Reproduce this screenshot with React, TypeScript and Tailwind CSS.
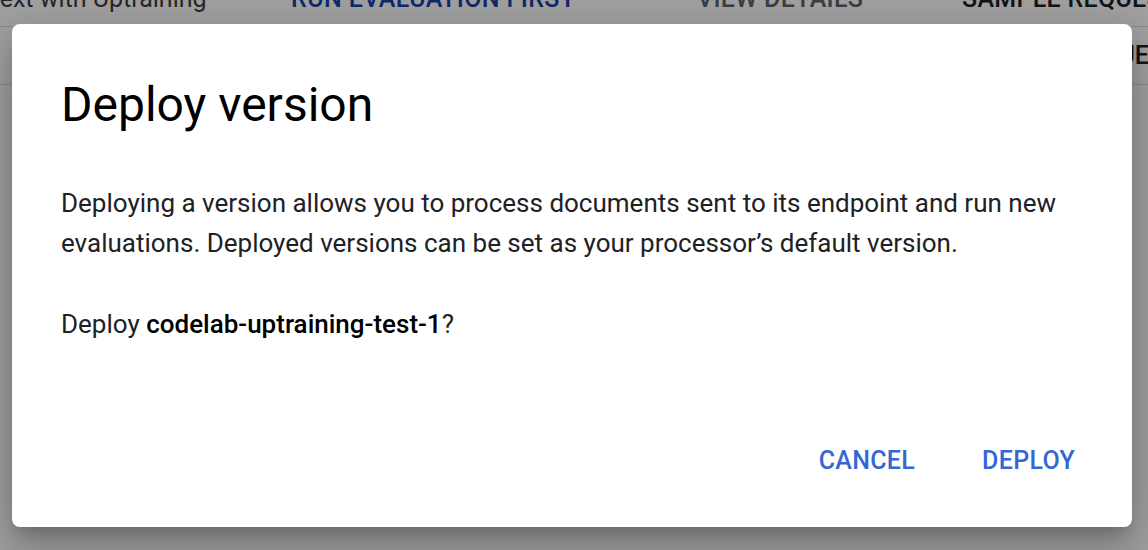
import React from "react";

const font = { fontFamily: "Roboto, 'Liberation Sans', sans-serif" };

const BackgroundPage = () => {
  return (
    <div className="absolute inset-0 bg-white">
      {/* toolbar row, mostly cut off at the top */}
      <div className="h-[27px] overflow-hidden border-b border-[#dadce0]">
        <div className="-mt-[15px] flex text-[25px] leading-[28px] whitespace-nowrap">
          <span className="-ml-[14px] w-[305px] shrink-0 text-[#3c4043]">Text with Uptraining</span>
          <span className="w-[406px] shrink-0 font-medium text-[#1a3fa8] tracking-[0.4px]">RUN EVALUATION FIRST</span>
          <span className="w-[265px] shrink-0 font-medium text-[#5f6368] tracking-[0.3px]">VIEW DETAILS</span>
          <span className="shrink-0 font-medium text-[#202124] tracking-[0.3px]">SAMPLE REQUEST</span>
        </div>
      </div>
      <div className="flex h-[58px] items-center justify-end overflow-hidden border-b border-[#dadce0] text-[25px] text-[#202124]">
        <span className="-mr-[1px] whitespace-nowrap font-medium">REQUE</span>
      </div>
    </div>
  );
};

const DeployDialog = () => {
  return (
    <div className="flex h-[503px] w-[1120px] flex-col rounded-[8px] bg-white pl-[49px] pr-[49px] shadow-[0_11px_15px_-7px_rgba(0,0,0,0.2),0_24px_38px_3px_rgba(0,0,0,0.14),0_9px_46px_8px_rgba(0,0,0,0.12)]">
      <h1 className="mt-[57px] text-[48px] leading-[48px] text-black">Deploy version</h1>
      <p className="mt-[54px] text-[26px] leading-[40px] text-[#202124]">
        Deploying a version allows you to process documents sent to its endpoint and run new evaluations. Deployed
        versions can be set as your processor’s default version.
      </p>
      <p className="mt-[41px] text-[26px] leading-[40px] text-[#202124]">
        Deploy <span className="font-medium text-black">codelab-uptraining-test-1</span>?
      </p>
      <div className="mt-auto mb-[48px] flex justify-end gap-[67px] pr-[8px]">
        <button className="text-[25px] font-medium tracking-[0.3px] text-[#3367d6]">CANCEL</button>
        <button className="text-[25px] font-medium tracking-[0.3px] text-[#3367d6]">DEPLOY</button>
      </div>
    </div>
  );
};

export default function App() {
  return (
    <div className="relative h-[550px] w-[1148px] overflow-hidden" style={font}>
      <BackgroundPage />
      <div className="absolute inset-0 bg-black/[0.37] pl-[12px] pt-[24px]">
        <DeployDialog />
      </div>
    </div>
  );
}
